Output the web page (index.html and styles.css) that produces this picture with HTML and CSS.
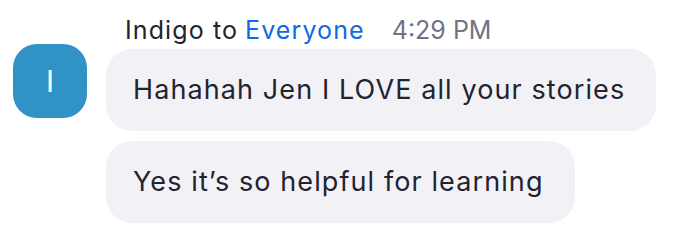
FILE: index.html
```html
<!DOCTYPE html>
<html lang="en">
<head>
  <meta charset="UTF-8">
  <title>Chat</title>
  <link rel="stylesheet" href="styles.css">
</head>
<body>
  <div class="message">
    <div class="avatar">I</div>
    <div class="content">
      <div class="header">
        <span class="sender">Indigo to</span>
        <span class="target">Everyone</span>
        <span class="time">4:29 PM</span>
      </div>
      <div class="bubble">Hahahah Jen I LOVE all your stories</div>
      <div class="bubble">Yes it’s so helpful for learning</div>
    </div>
  </div>
</body>
</html>
```

FILE: styles.css
```css
body {
  margin: 0;
  background: #fff;
  font-family: Inter, "Noto Sans", sans-serif;
  color: #232330;
}

.message {
  display: flex;
  align-items: flex-start;
  gap: 19px;
  padding-left: 13px;
}

.avatar {
  width: 74px;
  height: 74px;
  margin-top: 44px;
  border-radius: 24px;
  background: #3192c6;
  color: #fff;
  font-size: 30px;
  display: flex;
  justify-content: center;
  align-items: center;
}

.content {
  display: flex;
  flex-direction: column;
  align-items: flex-start;
  gap: 10px;
}

.header {
  padding: 15px 0 0 19px;
  height: 30px;
  line-height: 30px;
  font-size: 25px;
  margin-bottom: -6px;
}

.sender,
.target {
  letter-spacing: 1.1px;
}

.target {
  color: #0e6be3;
}

.time {
  color: #727284;
  margin-left: 20px;
}

.bubble {
  height: 82px;
  line-height: 82px;
  padding: 0 31px 0 27px;
  border-radius: 26px;
  background: #f1f1f6;
  font-size: 27px;
  letter-spacing: 1.1px;
}
```
